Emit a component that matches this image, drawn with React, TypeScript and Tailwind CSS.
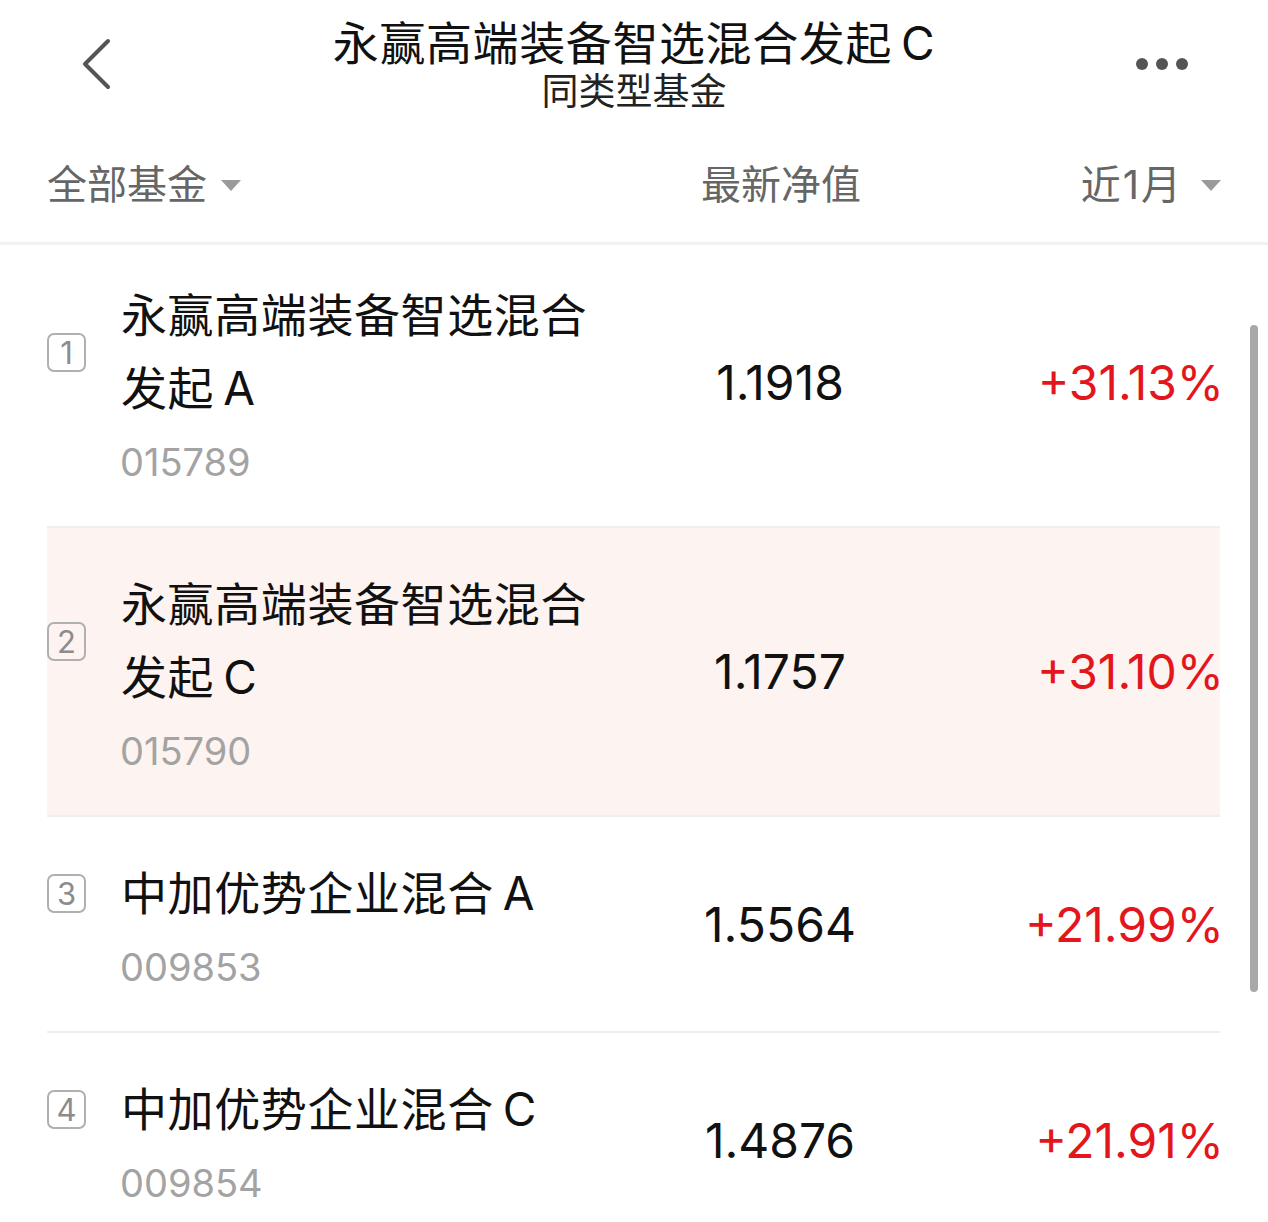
import React from "react";

const FONT = { fontFamily: 'Inter, "Noto Sans CJK SC", sans-serif' };

type Fund = {
  rank: number;
  name: string;
  code: string;
  nav: string;
  pct: string;
  highlight?: boolean;
};

const funds: Fund[] = [
  { rank: 1, name: "永赢高端装备智选混合发起\u2009A", code: "015789", nav: "1.1918", pct: "+31.13%" },
  { rank: 2, name: "永赢高端装备智选混合发起\u2009C", code: "015790", nav: "1.1757", pct: "+31.10%", highlight: true },
  { rank: 3, name: "中加优势企业混合\u2009A", code: "009853", nav: "1.5564", pct: "+21.99%" },
  { rank: 4, name: "中加优势企业混合\u2009C", code: "009854", nav: "1.4876", pct: "+21.91%" },
];

function Caret() {
  return (
    <svg width="20" height="11" viewBox="0 0 20 11" className="shrink-0">
      <polygon points="0,0 20,0 10,11" fill="#9a9a9a" />
    </svg>
  );
}

function Row({ f, first }: { f: Fund; first: boolean }) {
  const top = first ? "pt-[34px]" : "border-t-2 border-[#efefef] pt-[40px]";
  return (
    <div className={`flex items-center ${top} pb-[39px] ${f.highlight ? "bg-[#fdf3f0]" : ""}`}>
      <div className="flex flex-col">
        <div className="flex items-center">
          <div className="flex h-[39px] w-[39px] shrink-0 items-center justify-center rounded-[7px] border-2 border-[#b0b0b0] text-[31px] leading-none text-[#8c8c8c]">
            {f.rank}
          </div>
          <div className="ml-[35px] w-[490px] text-[46px] leading-[73px] tracking-[0.6px] text-[#111]">{f.name}</div>
        </div>
        <div className="ml-[73px] mt-[12px] text-[38px] leading-[50px] text-[#a3a3a3]">{f.code}</div>
      </div>
      <div className="ml-auto w-[260px] text-center text-[48px] leading-none text-[#111]">{f.nav}</div>
      <div className="-mr-[4px] w-[314px] text-right text-[48px] leading-none text-[#e3161d]">{f.pct}</div>
    </div>
  );
}

export default function App() {
  return (
    <div className="relative h-[1222px] w-[1268px] overflow-hidden bg-white" style={FONT}>
      {/* nav bar */}
      <div className="grid h-[128px] grid-cols-[1fr_auto_1fr] items-center">
        <div className="pl-[80px]">
          <svg width="34" height="52" viewBox="0 0 34 52">
            <polyline points="28,3 5,26 28,49" fill="none" stroke="#555" strokeWidth="4" strokeLinecap="round" strokeLinejoin="round" />
          </svg>
        </div>
        <div className="flex flex-col items-center">
          <div className="text-[46px] leading-[56px] tracking-[0.6px] text-[#111]">永赢高端装备智选混合发起{"\u2009"}C</div>
          <div className="text-[37px] leading-[42px] text-[#222]">同类型基金</div>
        </div>
        <div className="flex justify-end gap-[8px] pr-[80px]">
          <span className="h-[12px] w-[12px] rounded-full bg-[#555]" />
          <span className="h-[12px] w-[12px] rounded-full bg-[#555]" />
          <span className="h-[12px] w-[12px] rounded-full bg-[#555]" />
        </div>
      </div>

      {/* column headers */}
      <div className="flex h-[117px] items-center border-b-[3px] border-[#f2f2f2] px-[47px] text-[40px] text-[#666]">
        <div className="flex items-center gap-[14px]">
          <span>全部基金</span>
          <Caret />
        </div>
        <div className="ml-auto w-[260px] text-center">最新净值</div>
        <div className="flex w-[310px] items-center justify-end gap-[18px]">
          <span className="tracking-[2px]">近1月</span>
          <Caret />
        </div>
      </div>

      {/* list */}
      <div className="ml-[47px] mr-[48px] flex flex-col">
        {funds.map((f, i) => (
          <Row key={f.rank} f={f} first={i === 0} />
        ))}
      </div>

      {/* scrollbar */}
      <div className="absolute left-[1250px] top-[325px] h-[667px] w-[8px] rounded-full bg-[#a8a8a8]" />
    </div>
  );
}
